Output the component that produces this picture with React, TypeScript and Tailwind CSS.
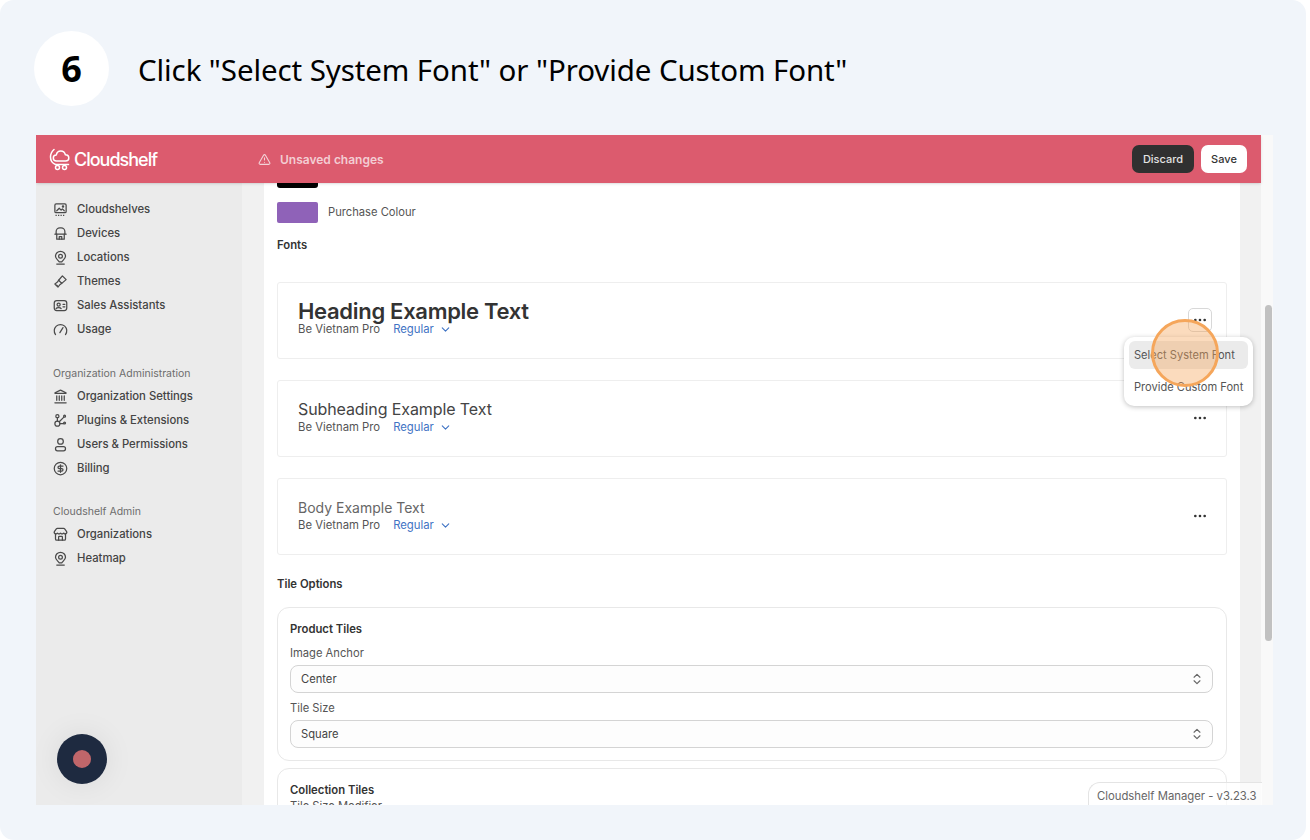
import { AlertTriangle, ChevronDown, ChevronsUpDown, Ellipsis, Landmark, Store, CircleDollarSign } from 'lucide-react';
import type { ReactNode } from 'react';

function Logo() {
  return (
    <svg width="22" height="24" viewBox="0 0 22 24" fill="none" stroke="white" strokeWidth="1.5" strokeLinecap="round" strokeLinejoin="round">
      <path d="M5 2.500C2.800 4.500 1.500 7 1.500 10c0 3.600 2 6.300 5 7.500h13" />
      <path d="M7.500 14c-2 0-3.200-1.300-3.200-3s1.300-3 3-3c.4-2.400 2.200-4 4.500-4s4 1.600 4.600 3.800c2 .1 3.400 1.500 3.400 3.200s-1.300 3-3.200 3z" />
      <circle cx="8.500" cy="20.500" r="2" />
      <circle cx="15.500" cy="20.500" r="2" />
    </svg>
  );
}

function Icon({ children }: { children: ReactNode }) {
  return (
    <svg width="15" height="15" viewBox="0 0 24 24" fill="none" stroke="currentColor" strokeWidth="2" strokeLinecap="round" strokeLinejoin="round">
      {children}
    </svg>
  );
}

const pinIcon = (
  <Icon>
    <path d="M12 2a8 8 0 0 1 8 8c0 4-4 6-6 9h-4c-2-3-6-5-6-9a8 8 0 0 1 8-8z" />
    <circle cx="12" cy="10" r="3" />
    <path d="M6 22.500h12" />
  </Icon>
);

const main = [
  {
    name: 'Cloudshelves',
    icon: (
      <Icon>
        <rect x="3" y="3" width="18" height="14" rx="2" />
        <path d="M6 14l4-4 3 3 2-2 3 3" />
        <circle cx="16" cy="7" r="1" />
        <path d="M4 21.500h16" strokeDasharray="2 2" strokeLinecap="butt" />
      </Icon>
    ),
  },
  {
    name: 'Devices',
    icon: (
      <Icon>
        <path d="M5 13V9a6 6 0 0 1 6-6h2a6 6 0 0 1 6 6v4" />
        <path d="M3 13h18" />
        <path d="M6 13v8h12v-8" />
        <path d="M10 21v-4h4v4" />
      </Icon>
    ),
  },
  { name: 'Locations', icon: pinIcon },
  {
    name: 'Themes',
    icon: (
      <Icon>
        <path d="M15 3l6 6-7 6-5-5z" />
        <path d="M9 10c-1 3-3 4-6 6l5 5c2-3 3-5 6-6" />
        <path d="M6 18l1 1" />
      </Icon>
    ),
  },
  {
    name: 'Sales Assistants',
    icon: (
      <Icon>
        <rect x="2" y="4" width="20" height="16" rx="4" />
        <circle cx="9" cy="10.500" r="2.500" />
        <path d="M5 17c1-2 7-2 8 0" />
        <path d="M16 10h3M16 14h3" />
      </Icon>
    ),
  },
  {
    name: 'Usage',
    icon: (
      <Icon>
        <path d="M4 20a10 10 0 1 1 16 0" />
        <path d="M11 17l5-8" />
      </Icon>
    ),
  },
];

const org = [
  { name: 'Organization Settings', icon: <Landmark size={15} strokeWidth={2} /> },
  {
    name: 'Plugins & Extensions',
    icon: (
      <Icon>
        <circle cx="7" cy="5" r="2.500" />
        <circle cx="18.500" cy="5" r="1.500" />
        <circle cx="7" cy="17" r="4" />
        <circle cx="18.500" cy="16" r="1.500" />
        <path d="M7 8v5M17 7l-7 7M11 17h6" />
      </Icon>
    ),
  },
  {
    name: 'Users & Permissions',
    icon: (
      <Icon>
        <circle cx="12" cy="7" r="4.500" />
        <rect x="4" y="15.500" width="16" height="6.500" rx="3.200" />
      </Icon>
    ),
  },
  { name: 'Billing', icon: <CircleDollarSign size={15} strokeWidth={2} /> },
];

const admin = [
  { name: 'Organizations', icon: <Store size={15} strokeWidth={2} /> },
  { name: 'Heatmap', icon: pinIcon },
];

function NavList({ items }: { items: { name: string; icon: ReactNode }[] }) {
  return (
    <div className="flex flex-col">
      {items.map((item) => (
        <div key={item.name} className="flex h-6 items-center pl-[17px] text-[11.3px] font-medium text-[#444444]">
          <span className="mr-[9px] flex w-[15px] justify-center text-[#4a4a4a]">{item.icon}</span>
          {item.name}
        </div>
      ))}
    </div>
  );
}

function FontCard({ label, className, padding }: { label: string; className: string; padding: string }) {
  return (
    <div className="mb-[21px] flex h-[77px] items-start justify-between rounded-[3px] border border-[#eeeeee] pl-5 pr-[18px]">
      <div className={`flex flex-col ${padding}`}>
        <span className={className}>{label}</span>
        <div className="mt-px flex items-center text-[11.3px] leading-[13px] text-[#555555]">
          <span>Be Vietnam Pro</span>
          <span className="ml-[13px] text-[#3f73c4]">Regular</span>
          <ChevronDown size={13} className="ml-[5px] text-[#3f73c4]" />
        </div>
      </div>
      <Ellipsis size={16} className="mt-[29px] text-[#333333]" />
    </div>
  );
}

function SelectBox({ value }: { value: string }) {
  return (
    <div className="flex h-7 items-center justify-between rounded-[8px] border border-[#d4d4d4] bg-[#fdfdfd] pl-[10px] pr-[8px] text-[11.2px] text-[#444444]">
      {value}
      <ChevronsUpDown size={14} className="text-[#666666]" />
    </div>
  );
}

export default function App() {
  return (
    <div className="h-[840px] w-[1310px] overflow-hidden bg-white font-['Inter',sans-serif]">
      <div className="relative flex h-[840px] w-[1306px] flex-col rounded-[14px] bg-[#f1f5fa] pl-9">
        <div className="flex h-[135px] items-start pt-[31px]">
          <div className="flex h-[75px] w-[75px] -translate-x-[2px] items-center justify-center rounded-full bg-white font-['Noto_Sans',sans-serif] text-[36px] font-bold text-black">6</div>
          <div className="ml-[27px] mt-[19px] font-['Noto_Sans',sans-serif] text-[29.5px] leading-[40px] tracking-[-0.1px] text-black">Click "Select System Font" or "Provide Custom Font"</div>
        </div>

        <div className="relative flex h-[670px] w-[1237px] overflow-hidden">
          <div className="flex w-[1225px] flex-col bg-[#f1f1f1]">
            <header className="z-10 flex h-[48px] shrink-0 items-center justify-between bg-[#dc5b6e] pl-[13px] pr-[14px] shadow-sm">
              <div className="flex items-center">
                <div className="flex w-[209px] items-center gap-[3px]">
                  <Logo />
                  <span className="text-[18px] font-medium tracking-[-1px] text-white">Cloudshelf</span>
                </div>
                <AlertTriangle size={13} className="text-[#f3d3d8]" />
                <span className="ml-[9px] translate-y-px text-[12px] font-semibold text-[#f3cdd3]">Unsaved changes</span>
              </div>
              <div className="flex items-center gap-[7px] text-[11px] font-medium">
                <span className="flex h-7 w-[62px] items-center justify-center rounded-[7px] bg-[#303030] text-[#e3e3e3]">Discard</span>
                <span className="flex h-7 w-[46px] items-center justify-center rounded-[7px] bg-white text-[#333333]">Save</span>
              </div>
            </header>

            <div className="flex min-h-0 flex-1">
              <aside className="flex w-[206px] shrink-0 flex-col bg-[#ebebeb] pt-[14px]">
                <NavList items={main} />
                <div className="mb-[4px] mt-[26px] pl-[17px] text-[10.5px] leading-[13px] text-[#6d6d6d]">Organization Administration</div>
                <NavList items={org} />
                <div className="mb-[4px] mt-[25px] pl-[17px] text-[10.5px] leading-[13px] text-[#6d6d6d]">Cloudshelf Admin</div>
                <NavList items={admin} />
              </aside>

              <main className="ml-[22px] w-[976px] overflow-hidden bg-white px-[13px]">
                <div className="h-[5px] w-[41px] rounded-b-[3px] bg-black" />
                <div className="mt-[14px] flex items-center">
                  <div className="h-[21px] w-[41px] rounded-[2px] bg-[#8f62b8]" />
                  <span className="ml-[10px] text-[11.2px] text-[#555555]">Purchase Colour</span>
                </div>
                <div className="mb-[30px] mt-[15px] text-[11.3px] font-semibold leading-[14px] text-[#333333]">Fonts</div>
                <FontCard label="Heading Example Text" padding="pt-[17px]" className="text-[22px] font-semibold leading-[22px] tracking-[-0.3px] text-[#333333]" />
                <FontCard label="Subheading Example Text" padding="pt-[17px]" className="text-[16px] leading-[22px] tracking-[-0.1px] text-[#444444]" />
                <FontCard label="Body Example Text" padding="pt-[19px]" className="text-[14px] leading-[20px] text-[#666666]" />
                <div className="mb-[16px] mt-[22px] text-[11.3px] font-semibold leading-[14px] text-[#333333]">Tile Options</div>
                <div className="mb-[7px] h-[154px] rounded-[12px] border border-[#e8e8e8] pl-[12px] pr-[13px] pt-[14px]">
                  <div className="text-[11.3px] font-semibold leading-[14px] text-[#333333]">Product Tiles</div>
                  <div className="mb-[5px] mt-[10px] text-[11.2px] leading-[14px] text-[#555555]">Image Anchor</div>
                  <SelectBox value="Center" />
                  <div className="mb-[5px] mt-[8px] text-[11.2px] leading-[14px] text-[#555555]">Tile Size</div>
                  <SelectBox value="Square" />
                </div>
                <div className="h-[80px] rounded-[12px] border border-[#e8e8e8] pl-[12px] pr-[13px] pt-[14px]">
                  <div className="text-[11.3px] font-semibold leading-[14px] text-[#333333]">Collection Tiles</div>
                  <div className="mt-[3px] text-[11.2px] leading-[13px] text-[#555555]">Tile Size Modifier</div>
                </div>
              </main>
            </div>
          </div>
          <div className="relative w-[12px] bg-[#f9f9f9]">
            <div className="absolute left-[4px] top-[170px] h-[336px] w-[7px] rounded-full bg-[#c1c1c1]" />
          </div>

          <div className="absolute left-[1152px] top-[173px] flex h-[24px] w-[24px] items-center justify-center rounded-[5px] border border-[#d8d8d8] bg-white">
            <Ellipsis size={16} className="text-[#333333]" />
          </div>
          <div className="absolute left-[1088px] top-[202px] flex h-[69px] w-[129px] flex-col rounded-[10px] bg-white px-[5px] pt-[4px] text-[11.1px] text-[#555555] shadow-[0_1px_5px_rgba(0,0,0,0.25)]">
            <div className="flex h-[28px] items-center rounded-[6px] bg-[#ebebeb] pl-[5px]">Select System Font</div>
            <div className="mt-[4px] flex h-[28px] items-center pl-[5px]">Provide Custom Font</div>
          </div>
          <div className="absolute left-[1115px] top-[184px] h-[68px] w-[68px] rounded-full border-[3px] border-[#f5a65b] bg-[#f5a65b]/40" />
          <div className="absolute left-[1052px] top-[647px] flex h-[30px] w-[174px] items-start rounded-tl-[12px] border border-r-0 border-[#e4e4e4] bg-white/70 pl-[8px] pt-[6px] text-[11.3px] leading-[14px] text-[#666666]">Cloudshelf Manager - v3.23.3</div>
          <div className="absolute left-[21px] top-[599px] flex h-[50px] w-[50px] items-center justify-center rounded-full bg-[#1e2a40] shadow-[0_0_30px_rgba(0,0,0,0.08)]">
            <div className="h-[18px] w-[18px] rounded-full bg-[#c0666a]" />
          </div>
        </div>
      </div>
    </div>
  );
}
